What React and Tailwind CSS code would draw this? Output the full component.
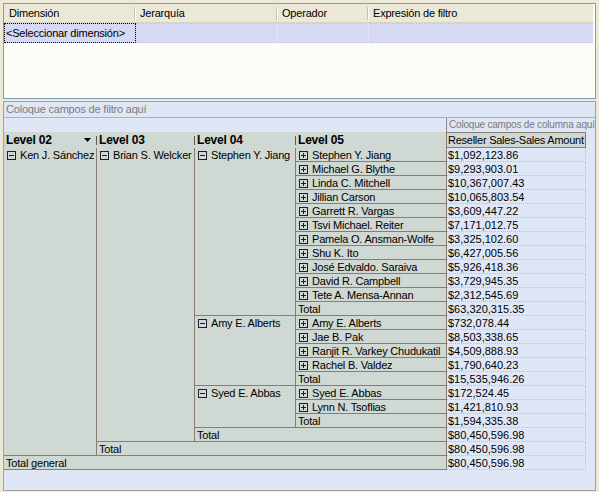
import React from "react";

const DK = "border-[#867e70]";
const GG = "bg-[#cfd8d3]";

function Box({ minus }) {
  return (
    <svg width="9" height="9" viewBox="0 0 9 9" className="shrink-0">
      <rect x="0.5" y="0.5" width="8" height="8" fill="none" stroke="#1c1c30" />
      <line x1="2" y1="4.5" x2="7" y2="4.5" stroke="#1c1c30" />
      {!minus && <line x1="4.5" y1="2" x2="4.5" y2="7" stroke="#1c1c30" />}
    </svg>
  );
}

function Sep() {
  return <div className="ml-auto w-px h-[9px] bg-[#5e5850] shrink-0" />;
}

function TopHead({ w, pl, children, last }) {
  return (
    <div className={`${w} flex items-center h-full shrink-0`}>
      <span className={`${pl} whitespace-nowrap`}>{children}</span>
      {!last && (
        <div className="ml-auto w-[2px] h-[13px] border-l border-r border-l-[#c5c1b0] border-r-white" />
      )}
    </div>
  );
}

function L5({ name }) {
  return (
    <div className={`border-r border-b ${DK} ${GG} flex items-center pt-[1px] pl-[3px] gap-[4px] whitespace-nowrap overflow-hidden`}>
      <Box />
      <span className="leading-[13px]">{name}</span>
    </div>
  );
}

function TotalCell({ span }) {
  return (
    <div className={`${span} border-r border-b ${DK} ${GG} pt-[1px] pl-[2px] leading-[13px] whitespace-nowrap`}>
      Total
    </div>
  );
}

function Val({ v }) {
  return (
    <div className="border-r border-b border-dotted border-[#b9c2d8] pt-[1px] pl-[1px] leading-[13px] tracking-normal whitespace-nowrap">
      {v}
    </div>
  );
}

function Parent({ span, name }) {
  return (
    <div className={`${span} border-r border-b ${DK} ${GG} overflow-hidden pt-[1px]`}>
      <div className="flex items-center h-[13px] pl-[3px] gap-[4px] whitespace-nowrap">
        <Box minus />
        <span className="leading-[13px]">{name}</span>
      </div>
    </div>
  );
}

const g1 = [
  ["Stephen Y. Jiang", "$1,092,123.86"],
  ["Michael G. Blythe", "$9,293,903.01"],
  ["Linda C. Mitchell", "$10,367,007.43"],
  ["Jillian Carson", "$10,065,803.54"],
  ["Garrett R. Vargas", "$3,609,447.22"],
  ["Tsvi Michael. Reiter", "$7,171,012.75"],
  ["Pamela O. Ansman-Wolfe", "$3,325,102.60"],
  ["Shu K. Ito", "$6,427,005.56"],
  ["José Edvaldo. Saraiva", "$5,926,418.36"],
  ["David R. Campbell", "$3,729,945.35"],
  ["Tete A. Mensa-Annan", "$2,312,545.69"],
];
const g2 = [
  ["Amy E. Alberts", "$732,078.44"],
  ["Jae B. Pak", "$8,503,338.65"],
  ["Ranjit R. Varkey Chudukatil", "$4,509,888.93"],
  ["Rachel B. Valdez", "$1,790,640.23"],
];
const g3 = [
  ["Syed E. Abbas", "$172,524.45"],
  ["Lynn N. Tsoflias", "$1,421,810.93"],
];

export default function App() {
  return (
    <div className="w-[599px] h-[492px] bg-[#ece9d8] pt-[3px] pl-[3px] font-['Liberation_Sans',Arial,sans-serif] text-[11px] tracking-[-0.2px] text-black leading-none overflow-hidden">
      {/* Filter grid */}
      <div className="w-[593px] h-[96px] border border-[#7f9db9] bg-[#fdfdf8] flex flex-col">
        <div className="flex h-[19px] w-[589px] bg-[#ebe8d8] border-b border-[#d9d5c6]">
          <TopHead w="w-[132px]" pl="pl-[5px]">Dimensión</TopHead>
          <TopHead w="w-[142px]" pl="pl-[4px]">Jerarquía</TopHead>
          <TopHead w="w-[91px]" pl="pl-[4px]">Operador</TopHead>
          <TopHead w="flex-1" pl="pl-[4px]" last>Expresión de filtro</TopHead>
        </div>
        <div className="flex h-[20px] w-[589px] bg-[#d5d9f4]">
          <div className="w-[132px] border border-dotted border-black flex items-center pl-[1px] whitespace-nowrap">
            &lt;Seleccionar dimensión&gt;
          </div>
          <div className="w-[142px] border-y border-r border-dotted border-y-[#c4c8e4] border-r-[#eef0fb]" />
          <div className="w-[91px] border-y border-r border-dotted border-y-[#c4c8e4] border-r-[#eef0fb]" />
          <div className="flex-1 border-y border-dotted border-[#c4c8e4]" />
        </div>
      </div>

      {/* Pivot */}
      <div className="mt-[2px] w-[593px] h-[390px] border border-[#a2a29a] bg-[#dfe6f5] flex flex-col">
        <div className="h-[16px] shrink-0 border-b border-[#a7b0c4] pl-[2px] text-[#7d7d7d] leading-[14px] whitespace-nowrap">
          Coloque campos de filtro aquí
        </div>
        <div className="h-[14px] shrink-0 flex">
          <div className="w-[442px] shrink-0" />
          <div className="flex-1 border-l border-[#8a8a8a] pl-[2px] text-[10px] leading-[13px] text-[#7b7b7b] whitespace-nowrap overflow-hidden">
            Coloque campos de columna aquí
          </div>
        </div>
        <div className="grid grid-cols-[93px_98px_101px_151px_139px] grid-rows-[16px] auto-rows-[14px] w-[582px]">
          {/* header */}
          <div className={`${GG} flex items-center pl-[2px] font-bold text-[12px]`}>
            <span>Level 02</span>
            <svg width="7" height="4" viewBox="0 0 7 4" className="ml-auto mr-[5px]">
              <polygon points="0,0 7,0 3.5,4" fill="#000" />
            </svg>
            <div className="w-px h-[9px] bg-[#5e5850]" />
          </div>
          <div className={`${GG} flex items-center pl-[2px] font-bold text-[12px]`}>
            <span>Level 03</span>
            <Sep />
          </div>
          <div className={`${GG} flex items-center pl-[2px] font-bold text-[12px]`}>
            <span>Level 04</span>
            <Sep />
          </div>
          <div className={`${GG} flex items-center pl-[2px] font-bold text-[12px] border-r ${DK}`}>
            <span>Level 05</span>
          </div>
          <div className={`${GG} border-t border-r border-b ${DK} pl-[1px] flex items-center tracking-[-0.25px] whitespace-nowrap overflow-hidden`}>
            Reseller Sales-Sales Amount
          </div>

          {/* body */}
          <Parent span="row-span-22" name="Ken J. Sánchez" />
          <Parent span="row-span-21" name="Brian S. Welcker" />
          <Parent span="row-span-12" name="Stephen Y. Jiang" />
          {g1.map(([n, v]) => (
            <React.Fragment key={n}>
              <L5 name={n} />
              <Val v={v} />
            </React.Fragment>
          ))}
          <TotalCell span="" />
          <Val v="$63,320,315.35" />

          <Parent span="row-span-5" name="Amy E. Alberts" />
          {g2.map(([n, v]) => (
            <React.Fragment key={n}>
              <L5 name={n} />
              <Val v={v} />
            </React.Fragment>
          ))}
          <TotalCell span="" />
          <Val v="$15,535,946.26" />

          <Parent span="row-span-3" name="Syed E. Abbas" />
          {g3.map(([n, v]) => (
            <React.Fragment key={n}>
              <L5 name={n} />
              <Val v={v} />
            </React.Fragment>
          ))}
          <TotalCell span="" />
          <Val v="$1,594,335.38" />

          <TotalCell span="col-span-2" />
          <Val v="$80,450,596.98" />
          <TotalCell span="col-span-3" />
          <Val v="$80,450,596.98" />
          <div className={`col-span-4 border-r border-b ${DK} ${GG} pt-[1px] pl-[2px] leading-[13px] whitespace-nowrap`}>
            Total general
          </div>
          <Val v="$80,450,596.98" />
        </div>
      </div>
    </div>
  );
}
